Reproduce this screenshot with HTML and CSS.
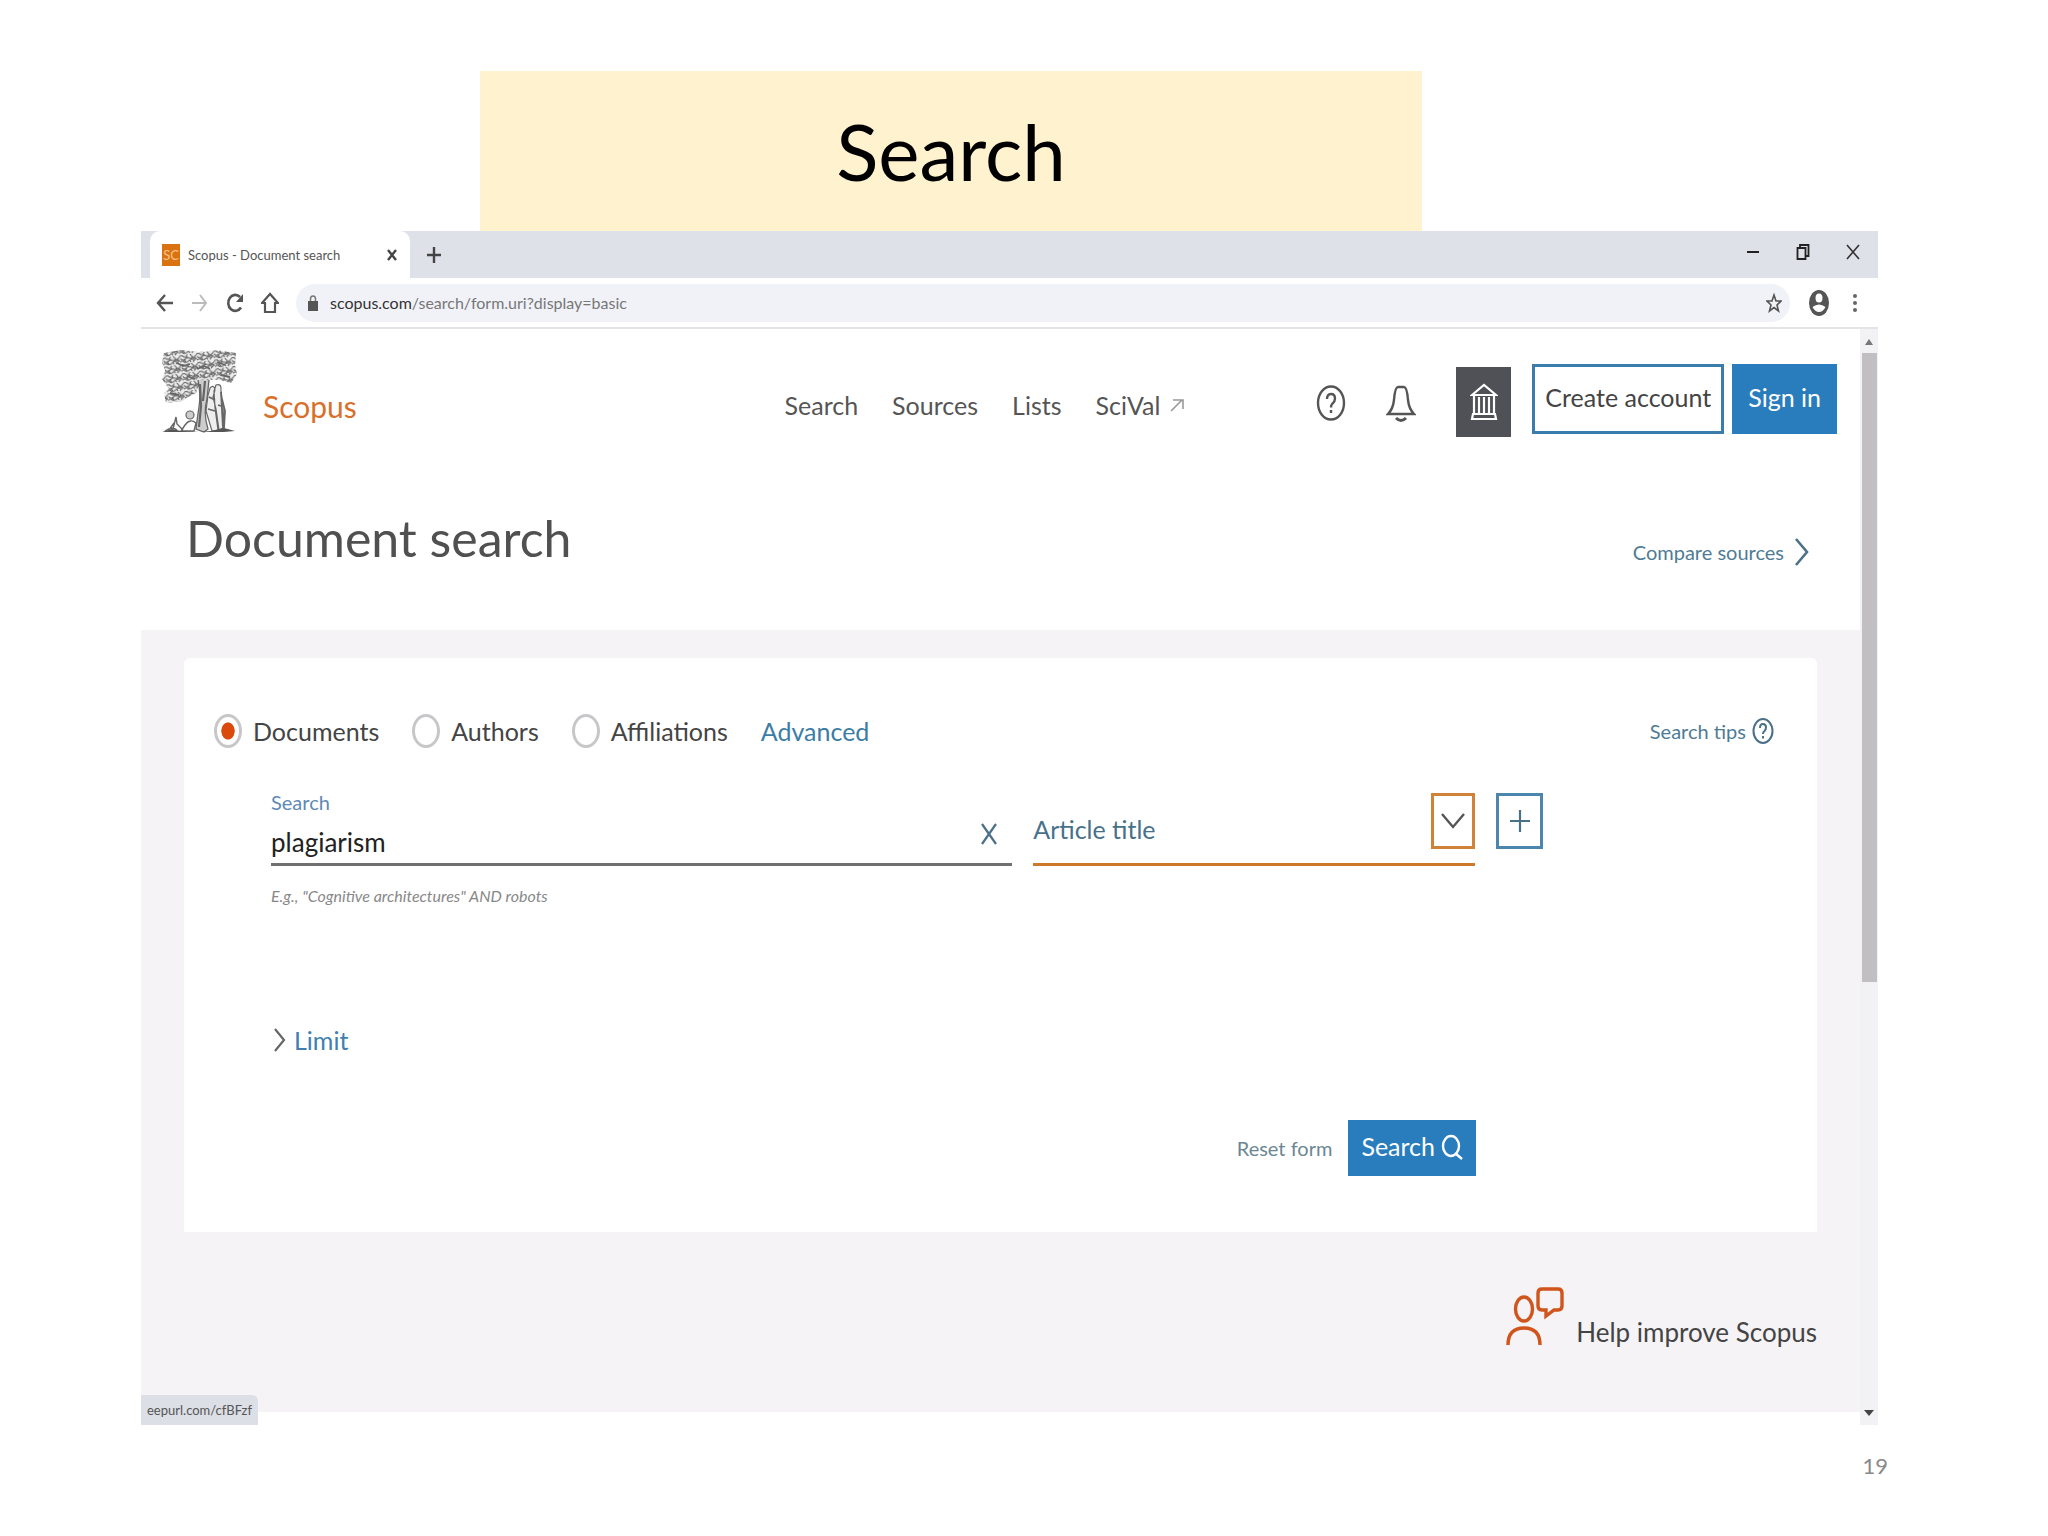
FILE: index.html
```
<!DOCTYPE html>
<html lang="en">
<head>
  <meta charset="UTF-8">
  <title>Search</title>
  <link rel="stylesheet" href="styles.css">
</head>
<body>

  <h1 class="slide-title">Search</h1>

  <div class="window">
    <!-- browser chrome -->
    <div class="tabs">
      <div class="tab">
        <span class="favicon">SC</span>
        <span class="tab-name">Scopus - Document search</span>
        <button class="icon-btn" aria-label="Close tab"><svg width="12" height="14" viewBox="0 0 12 14"><path d="M2 2l8 10M10 2L2 12" stroke="#444" stroke-width="2.4"/></svg></button>
      </div>
      <button class="icon-btn new-tab" aria-label="New tab"><svg width="16" height="18" viewBox="0 0 16 18"><path d="M8 1v16M1 9h14" stroke="#444" stroke-width="2.4"/></svg></button>
      <div class="win-buttons">
        <button class="icon-btn" aria-label="Minimize"><svg width="14" height="18" viewBox="0 0 14 18"><path d="M1 9h12" stroke="#222" stroke-width="2"/></svg></button>
        <button class="icon-btn" aria-label="Restore"><svg width="14" height="18" viewBox="0 0 14 18" fill="none" stroke="#222" stroke-width="1.8"><path d="M1.500 5h8v11h-8zM4 5V2h8.500v11h-3"/></svg></button>
        <button class="icon-btn" aria-label="Close"><svg width="14" height="18" viewBox="0 0 14 18"><path d="M1 2l12 14M13 2L1 16" stroke="#333" stroke-width="1.6"/></svg></button>
      </div>
    </div>

    <div class="toolbar">
      <button class="icon-btn" aria-label="Back"><svg width="18" height="22" viewBox="0 0 18 22" fill="none" stroke="#555" stroke-width="2.4"><path d="M17 11H2M9 3l-7 8 7 8"/></svg></button>
      <button class="icon-btn" aria-label="Forward"><svg width="18" height="22" viewBox="0 0 18 22" fill="none" stroke="#bbb" stroke-width="2"><path d="M1 11h14M9 3l6 8-6 8"/></svg></button>
      <button class="icon-btn" aria-label="Reload"><svg width="18" height="22" viewBox="0 0 18 22" fill="none" stroke="#555" stroke-width="2.6"><path d="M15 15.500A7 8 0 1 1 14 5"/><path d="M17 2v8h-7z" fill="#555" stroke="none"/></svg></button>
      <button class="icon-btn" aria-label="Home"><svg width="18" height="22" viewBox="0 0 18 22" fill="none" stroke="#555" stroke-width="2.2"><path d="M4 11v9h10v-9h3L9 2 1 11z"/></svg></button>
      <div class="address">
        <svg width="10" height="18" viewBox="0 0 10 18"><path d="M2.500 8V5q0-3 2.500-3t2.500 3v3" fill="none" stroke="#777" stroke-width="1.500"/><path d="M0 7h10v10H0z" fill="#555"/></svg>
        <span class="url"><b>scopus.com</b>/search/form.uri?display=basic</span>
        <svg width="16" height="20" viewBox="0 0 16 20" fill="none" stroke="#555" stroke-width="1.600"><path d="M8 2l2 6h5l-4 4 1.500 6L8 14.500 3.500 18 5 12 1 8h5z"/></svg>
      </div>
      <svg class="avatar" width="20" height="26" viewBox="0 0 20 26"><ellipse cx="10" cy="13" rx="10" ry="13" fill="#555"/><ellipse cx="10" cy="8" rx="3.500" ry="4.500" fill="#fff"/><path d="M3.500 17q6.500-5 13 0-2.500 5-6.500 5t-6.500-5z" fill="#fff"/></svg>
      <svg width="6" height="20" viewBox="0 0 6 20" fill="#666"><circle cx="3" cy="3" r="2"/><circle cx="3" cy="10" r="2"/><circle cx="3" cy="17" r="2"/></svg>
    </div>

    <div class="viewport">
      <div class="page">
        <header class="header">
          <svg class="tree" width="76" height="86" viewBox="0 0 76 86" fill="none" stroke="#666">
            <defs>
              <pattern id="leaf" width="17" height="9" patternUnits="userSpaceOnUse" patternTransform="rotate(-8)">
                <path d="M0 1.500q2-2 4 0t4-1 4 1 5 0M1 4q3 2 5 0t6 1 4-1M0 7q3-2 4 0t6-1 7 0M7 2l2 2M13 3l-2 2M4 5l2 2M15 6l-2 2M1 3l1 2M10 6l1 2" stroke-width="1.100"/>
              </pattern>
            </defs>
            <path d="M3 4L20 1 38 3 55 1 75 4 74 16 76 25 70 34 58 31 46 31 39 34 35 44 27 48 22 52 5 54 3 44 8 40 1 30 4 22 1 13z" fill="#ececec" stroke="none"/>
            <path d="M3 4L20 1 38 3 55 1 75 4 74 16 76 25 70 34 58 31 46 31 39 34 35 44 27 48 22 52 5 54 3 44 8 40 1 30 4 22 1 13z" fill="url(#leaf)" stroke="none"/>
            <path d="M16 14l6 3 7-2M36 20l7-3 6 3M56 13l8 3M26 27l8 3M60 26l9 2M9 44l9 2" stroke-width="1.800"/>
            <path d="M37 31q3 14 1 27t-3 22l8 3 4-3q-5-16-1-30l2-19" fill="#ccc" stroke-width="1.300"/>
            <path d="M39 35l1 22-2 21M44 32l-2 20" stroke-width="2.200"/>
            <path d="M49 39q4-4 5 2l-2 7 3 12 3 21-7 1-6-20 2-16zM55 36q6-2 5 6l2 15 1 22-6 2-3-22-1-17z" fill="#eee" stroke-width="1.200"/>
            <path d="M60 43l2 36M61 50l3 12-1 17M48 48l6 3M47 60l7 2M57 56l3 1" stroke-width="1.800"/>
            <circle cx="29" cy="66" r="4" fill="#ccc" stroke-width="1.200"/>
            <path d="M24 76q5-7 11-2l-2 8H20zM12 80l3-12 1 7 6 6M8 81l5-7M4 82q7-5 12-1" stroke-width="1.400"/>
            <path d="M1 83l10-3 9 2 18 1 12-1 13-3 11 3-11 1H6z" fill="#555" stroke="none"/>
          </svg>
          <a class="brand" href="#">Scopus</a>
          <nav class="nav">
            <a href="#">Search</a>
            <a href="#">Sources</a>
            <a href="#">Lists</a>
            <a href="#">SciVal <svg width="14" height="14" viewBox="0 0 14 14" fill="none" stroke="#999" stroke-width="1.600"><path d="M1 13L12 2M3 2h10v9"/></svg></a>
          </nav>
          <button class="icon-btn help" aria-label="Help"><svg width="30" height="36" viewBox="0 0 30 36" fill="none" stroke="#555" stroke-width="2.400"><ellipse cx="15" cy="18" rx="13" ry="16.500"/><path d="M11 14q0-5 4-5t4 4.500q0 3-2.500 5-1.500 1.500-1.500 4M15 25v3"/></svg></button>
          <button class="icon-btn bell" aria-label="Alerts"><svg width="30" height="38" viewBox="0 0 30 38" fill="none" stroke="#555" stroke-width="2.400"><path d="M2 30q5-5 6-14 1-13 4-13h6q3 0 4 13 1 9 6 14z"/><path d="M10 34q5 5 10 0" stroke-width="3"/></svg></button>
          <button class="institution" aria-label="Institution"><svg width="28" height="38" viewBox="0 0 28 38" fill="none" stroke="#fff" stroke-width="2.200"><path d="M2 12L14 2l12 10zM4 12v20M9 14v17M14 14v17M19 14v17M24 12v20M3 31h22l1 5H2z"/></svg></button>
          <button class="btn outline">Create account</button>
          <button class="btn">Sign in</button>
        </header>

        <div class="heading">
          <h2>Document search</h2>
          <a class="small-link" href="#">Compare sources <svg width="16" height="28" viewBox="0 0 16 28" fill="none" stroke="#4b7188" stroke-width="2.600"><path d="M2 1l11 13L2 27"/></svg></a>
        </div>

        <main class="content">
          <form class="card">
            <div class="types">
              <label><input type="radio" name="type" checked> Documents</label>
              <label><input type="radio" name="type"> Authors</label>
              <label><input type="radio" name="type"> Affiliations</label>
              <a class="advanced" href="#">Advanced</a>
              <a class="small-link tips" href="#">Search tips <svg width="22" height="26" viewBox="0 0 22 26" fill="none" stroke="#4b7188" stroke-width="2"><ellipse cx="11" cy="13" rx="9.500" ry="12"/><path d="M8 10q0-4 3-4t3 3.500q0 2-1.500 3.500-1.500 1-1.500 3M11 18v2.500"/></svg></a>
            </div>

            <div class="fields">
              <div class="term">
                <label for="term">Search</label>
                <input id="term" type="text" value="plagiarism">
                <button type="button" class="icon-btn clear" aria-label="Clear"><svg width="18" height="22" viewBox="0 0 18 22"><path d="M2 1l14 20M16 1L2 21" stroke="#4b7188" stroke-width="2.200"/></svg></button>
              </div>
              <div class="scope">
                <select aria-label="Search within"><option>Article title</option></select>
                <span class="arrow"><svg width="24" height="18" viewBox="0 0 24 18" fill="none" stroke="#555" stroke-width="2.400"><path d="M1 2l11 13L23 2"/></svg></span>
              </div>
              <button type="button" class="add" aria-label="Add search field"><svg width="20" height="22" viewBox="0 0 20 22"><path d="M10 0v22M0 11h20" stroke="#4b7188" stroke-width="2.200"/></svg></button>
            </div>
            <p class="hint">E.g., "Cognitive architectures" AND robots</p>

            <a class="limit" href="#"><svg width="13" height="24" viewBox="0 0 13 24" fill="none" stroke="#666" stroke-width="2.200"><path d="M2 1l9 11-9 11"/></svg>Limit</a>

            <div class="actions">
              <button type="reset" class="reset">Reset form</button>
              <button type="button" class="btn submit">Search <svg width="22" height="28" viewBox="0 0 22 28" fill="none" stroke="#fff" stroke-width="2.400"><ellipse cx="10" cy="14" rx="8" ry="10"/><path d="M14 21l7 6"/></svg></button>
            </div>
          </form>

          <a class="improve" href="#"><svg width="58" height="60" viewBox="0 0 58 60" fill="none" stroke="#d0541b" stroke-width="3.400"><ellipse cx="18" cy="22" rx="8.500" ry="12"/><path d="M2 58q0-17 16-17t16 17M36 2h16q4 0 4 4v13q0 4-4 4h-4l-8 6v-6h-4q-4 0-4-4V6q0-4 4-4z"/></svg>Help improve Scopus</a>
        </main>
      </div>

      <div class="scrollbar">
        <svg width="8" height="6" viewBox="0 0 8 6"><path d="M0 6l4-6 4 6z" fill="#777"/></svg>
        <div class="thumb"></div>
        <svg class="down" width="10" height="6" viewBox="0 0 10 6"><path d="M0 0h10L5 6z" fill="#444"/></svg>
      </div>
      <div class="status">eepurl.com/cfBFzf</div>
    </div>
  </div>

  <div class="page-number">19</div>

</body>
</html>
```
FILE: styles.css
```
* { box-sizing: border-box; }
body { margin: 0; padding: 71px 170px 0 141px; background: #fff; font-family: Lato, "Open Sans", sans-serif; font-size: 25px; line-height: 30px; color: #444; }
a { color: inherit; text-decoration: none; }
button, input, select { font: inherit; color: inherit; margin: 0; padding: 0; border: 0; background: none; border-radius: 0; }
button { cursor: pointer; }
svg { flex: none; display: block; }

.slide-title { width: 942px; max-width: 100%; margin: 0 0 0 339px; padding: 32px 0; background: #fff2cf; color: #000; font-size: 78px; line-height: 96px; font-weight: 400; text-align: center; }

/* browser chrome */
.icon-btn { display: flex; align-items: center; justify-content: center; flex: none; }
.tabs { display: flex; align-items: center; height: 47px; padding-left: 9px; background: #dfe1e9; }
.tab { display: flex; align-items: center; align-self: stretch; width: 260px; padding: 0 12px; gap: 8px; background: #fff; border-radius: 10px 10px 0 0; }
.favicon { width: 18px; height: 22px; background: #d9720f; color: #f6c48c; font-size: 13px; line-height: 22px; text-align: center; }
.tab-name { flex: 1; font-size: 13px; color: #555; white-space: nowrap; }
.new-tab { margin-left: 16px; }
.win-buttons { display: flex; gap: 36px; margin-left: auto; padding: 0 18px 6px 0; }
.toolbar { display: flex; align-items: center; height: 51px; padding: 0 20px 0 15px; gap: 17px; border-bottom: 2px solid #e4e4e8; }
.address { display: flex; align-items: center; flex: 1; height: 38px; padding: 0 8px 0 12px; gap: 12px; border-radius: 19px; background: #f1f2f7; }
.url { flex: 1; font-size: 16px; color: #777; }
.url b { font-weight: 400; color: #333; }
.avatar { margin: 0 6px 0 2px; }

.viewport { position: relative; display: flex; }
.page { flex: 1; min-width: 0; padding-bottom: 13px; }
.scrollbar { display: flex; flex-direction: column; align-items: center; width: 18px; padding: 10px 0 9px; background: #f2f1f3; }
.thumb { width: 15px; height: 629px; margin-top: 8px; background: #c1bfc2; }
.down { margin-top: auto; }
.status { position: absolute; left: 0; bottom: 0; padding: 0 6px; background: #dcdfe6; border-radius: 0 6px 0 0; font-size: 13px; color: #555; }

/* site header */
.header { display: flex; align-items: center; padding: 18px 23px 0 20px; color: #555; }
.brand { margin: 28px 0 0 26px; font-size: 30px; color: #d9702a; }
.nav { display: flex; gap: 34px; margin: 26px 132px 0 auto; }
.nav a { display: flex; align-items: center; gap: 10px; }
.help, .bell { margin: 22px 40px 0 0; }
.institution { display: flex; align-items: center; justify-content: center; width: 55px; height: 70px; margin: 20px 21px 0 0; background: #505156; }
.btn { display: flex; align-items: center; justify-content: center; height: 70px; padding: 0 16px 4px; background: #2a7dbd; color: #fff; white-space: nowrap; }
.header .btn { margin-top: 14px; }
.header .outline { padding: 0 10px 4px; margin-right: 8px; background: #fff; color: #444; border: 3px solid #3a7cab; }
.heading { display: flex; align-items: center; justify-content: space-between; padding: 66px 50px 57px 45px; }
.heading h2 { margin: 0; font-size: 50px; line-height: 70px; font-weight: 400; color: #505050; }
.small-link { display: flex; align-items: center; gap: 10px; font-size: 20px; color: #4f7b94; }
.heading .small-link { margin-top: 28px; }

.content { padding: 28px 43px 65px; background: #f5f3f6; }
.card { padding: 56px 0 56px; background: #fff; border-radius: 6px 6px 0 0; }
.types { display: flex; align-items: center; padding: 0 43px 0 30px; }
.types label { display: flex; align-items: center; gap: 11px; margin-right: 33px; }
.types input { appearance: none; width: 28px; height: 34px; border: 3px solid #c8c6c9; border-radius: 50%; background: #fff; }
.types input:checked { background: radial-gradient(7px 9px, #d94a0c 90%, #fff 100%); }
.advanced { color: #3b7da5; }
.tips { margin-left: auto; gap: 6px; }

.fields { display: grid; grid-template-columns: 740fr 441fr 47px; gap: 21px; align-items: end; margin: 39px 274px 0 87px; }
.term { position: relative; border-bottom: 3px solid #707070; }
.term label { display: block; font-size: 20px; color: #6089b5; line-height: 30px; }
.term input { display: block; width: 100%; height: 46px; padding: 4px 40px 0 0; font-size: 26px; color: #222; outline: none; }
.clear { position: absolute; right: 14px; bottom: 18px; }
.scope { position: relative; border-bottom: 3px solid #cd782b; }
.scope select { appearance: none; display: block; width: 100%; height: 76px; padding-top: 8px; color: #47718a; }
.arrow { position: absolute; right: 0; top: 6px; display: flex; align-items: center; justify-content: center; width: 44px; height: 56px; border: 3px solid #d08238; background: #fff; pointer-events: none; }
.add { display: flex; align-items: center; justify-content: center; width: 47px; height: 56px; margin-bottom: 17px; border: 3px solid #4a86ad; }
.hint { margin: 15px 0 0 87px; font-size: 16px; font-style: italic; color: #888; }
.limit { display: flex; align-items: center; gap: 8px; margin: 114px 0 0 89px; color: #4080b0; }
.actions { display: flex; align-items: center; justify-content: flex-end; gap: 16px; margin: 65px 341px 0 0; }
.reset { font-size: 20px; color: #6b8793; }
.submit { height: 56px; padding: 0 13px 4px; gap: 6px; }
.improve { display: flex; align-items: flex-end; justify-content: flex-end; gap: 12px; margin-top: 55px; font-size: 26px; }

.page-number { margin: 26px -10px 0 0; font-size: 22px; color: #888; text-align: right; }
```
